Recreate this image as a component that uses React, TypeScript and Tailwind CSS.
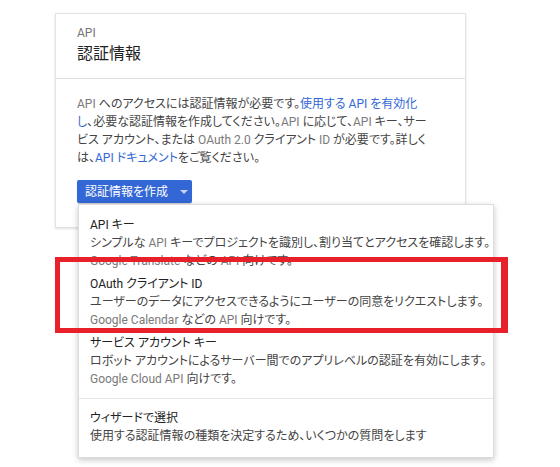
import React from "react";

const L = ({ children }: { children: React.ReactNode }) => (
  <span className="text-[#3367d6]">{children}</span>
);
const G = ({ children }: { children: React.ReactNode }) => (
  <span className="text-[#7a7a7a]">{children}</span>
);

export default function App() {
  return (
    <div
      className="relative w-[560px] h-[467px] bg-white overflow-hidden [font-feature-settings:'palt'] text-[#444]"
      style={{ fontFamily: "Roboto, 'Noto Sans CJK JP', sans-serif" }}
    >
      <div className="ml-[55px] mt-[13px] w-[411px] border border-[#e3e3e3] shadow-[0_1px_2px_rgba(0,0,0,0.12)] bg-white">
        <div className="px-[21px] pt-[11px] pb-[13px] border-b border-[#e0e0e0]">
          <div className="text-[12px] leading-[16px] text-[#757575]">API</div>
          <div className="text-[16px] leading-[22px] text-[#212121] mt-[2px]">認証情報</div>
        </div>
        <div className="px-[21px] pt-[16px] pb-[24px]">
          <div className="text-[12px] leading-[18px] whitespace-nowrap">
            <div>
              <G>API</G> へのアクセスには認証情報が必要です。<L>使用する API を有効化</L>
            </div>
            <div>
              <L>し</L>、必要な認証情報を作成してください。<G>API</G> に応じて、<G>API</G> キー、サー
            </div>
            <div>
              ビス アカウント、または <G>OAuth 2.0</G> クライアント <G>ID</G> が必要です。詳しく
            </div>
            <div>
              は、<L>API ドキュメント</L>をご覧ください。
            </div>
          </div>
          <div className="relative mt-[13px] w-fit">
            <div className="flex items-center h-[23px] w-[115px] pl-[8px] bg-[#3367d6] rounded-[2px] text-white text-[12px] shadow-[0_1px_1px_rgba(0,0,0,0.2)]">
              <span>認証情報を作成</span>
              <svg width="8" height="4" viewBox="0 0 8 4" className="ml-[12px]">
                <path d="M0 0 L8 0 L4 4 Z" fill="#c6d4f4" />
              </svg>
            </div>
            <div className="absolute left-[1px] top-[24px] w-[416px] h-[254px] bg-white border border-[#dcdcdc] shadow-[0_2px_6px_rgba(0,0,0,0.22)] pt-[8px] z-10">
              <div className="px-[11px] pt-[3px] pb-[2px] leading-[18px] whitespace-nowrap">
                <div className="text-[12px] text-[#212121]">API キー</div>
                <div className="text-[12px]">
                  シンプルな <G>API</G> キーでプロジェクトを識別し、割り当てとアクセスを確認します。
                </div>
                <div className="text-[12px]">
                  <G>Google Translate</G> などの <G>API</G> 向けです。
                </div>
              </div>
              <div className="px-[11px] pt-[3px] pb-[2px] leading-[18px] whitespace-nowrap">
                <div className="text-[12px] text-[#212121]">OAuth クライアント ID</div>
                <div className="text-[12px]">
                  ユーザーのデータにアクセスできるようにユーザーの同意をリクエストします。
                </div>
                <div className="text-[12px]">
                  <G>Google Calendar</G> などの <G>API</G> 向けです。
                </div>
              </div>
              <div className="px-[11px] pt-[3px] pb-[2px] leading-[18px] whitespace-nowrap">
                <div className="text-[12px] text-[#212121]">サービス アカウント キー</div>
                <div className="text-[12px]">
                  ロボット アカウントによるサーバー間でのアプリレベルの認証を有効にします。
                </div>
                <div className="text-[12px]">
                  <G>Google Cloud API</G> 向けです。
                </div>
              </div>
              <div className="mt-[8px] border-t border-[#e6e6e6]" />
              <div className="px-[11px] pt-[10px] leading-[18px] whitespace-nowrap">
                <div className="text-[12px] text-[#212121]">ウィザードで選択</div>
                <div className="text-[12px]">
                  使用する認証情報の種類を決定するため、いくつかの質問をします
                </div>
              </div>
            </div>
          </div>
        </div>
      </div>
      <div className="absolute left-[55px] top-[257px] w-[453px] h-[76px] border-[5px] border-r-[7px] border-[#e8202a] z-20" />
    </div>
  );
}
